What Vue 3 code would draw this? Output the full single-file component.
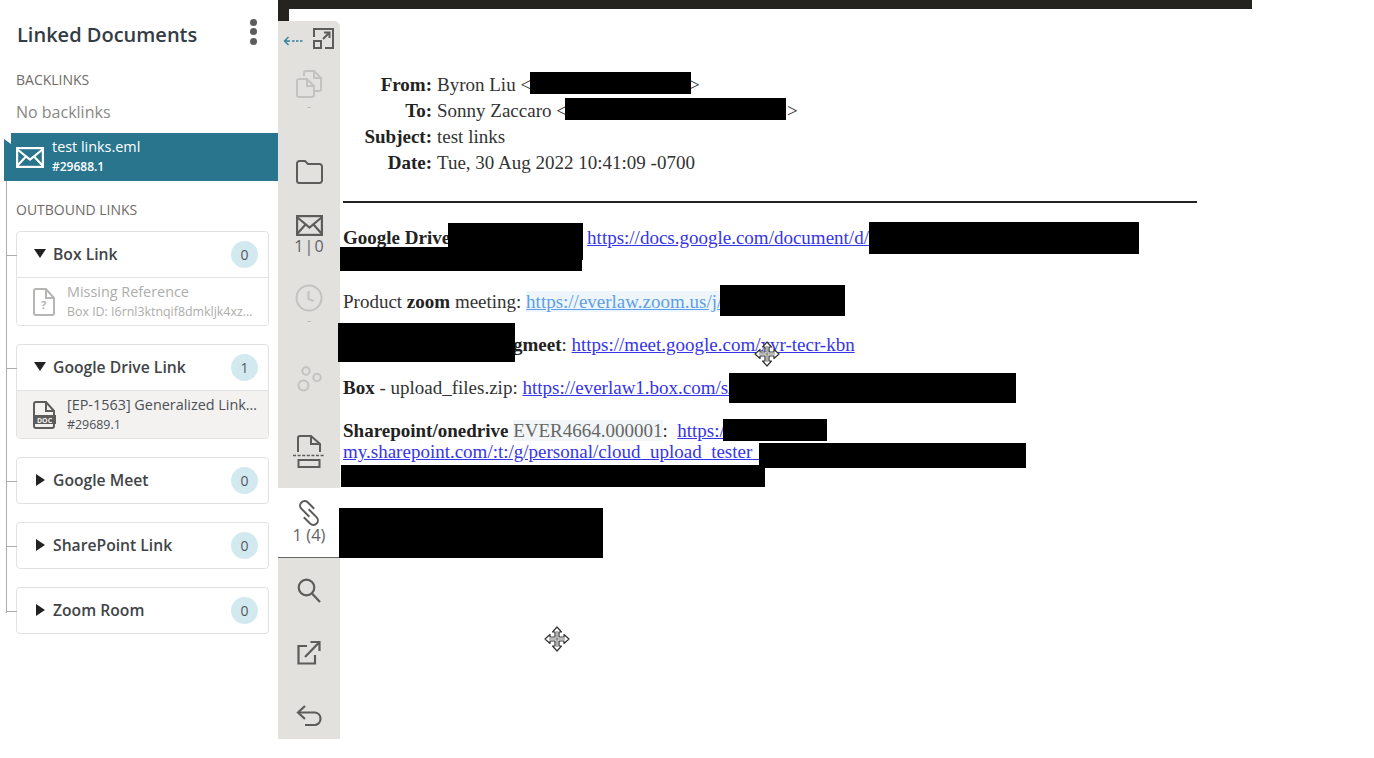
<script setup>
const groups = [
  { name: 'Box Link', count: 0, open: true, missing: true, title: 'Missing Reference', sub: 'Box ID: I6rnl3ktnqif8dmkljk4xzq7vbn2p0w' },
  { name: 'Google Drive Link', count: 1, open: true, title: '[EP-1563] Generalized Link Resolution', sub: '#29689.1' },
  { name: 'Google Meet', count: 0 },
  { name: 'SharePoint Link', count: 0 },
  { name: 'Zoom Room', count: 0 },
]
const redactions = [
  [530, 72, 161, 22], [565, 98, 221, 22], [448, 223, 135, 37], [340, 247, 242, 24],
  [869, 222, 270, 32], [720, 285, 125, 31], [338, 323, 177, 39], [729, 373, 287, 30],
  [723, 419, 104, 22], [759, 443, 267, 25], [341, 465, 424, 22], [339, 508, 264, 50],
]
const boxStyle = ([x, y, w, h]) => ({ left: x - 340 + 'px', top: y - 9 + 'px', width: w + 'px', height: h + 'px' })
const cursors = [{ left: '414px', top: '332px' }, { left: '204px', top: '617px' }]
</script>

<template>
  <div class="page">
    <aside class="side">
      <header class="side-head">
        <h1>Linked Documents</h1>
        <div class="kebab"><i></i><i></i><i></i></div>
      </header>
      <div class="label back-label">BACKLINKS</div>
      <div class="none">No backlinks</div>
      <div class="current">
        <svg width="28" height="21" viewBox="0 0 28 21" fill="none" stroke="#fff" stroke-width="2.2">
          <rect x="1.1" y="1.1" width="25.8" height="18.8" />
          <path d="M1.5 2.5 14 12.5 26.5 2.500M1.500 18.500 10 9.500M26.500 18.500 18 9.500" />
        </svg>
        <div class="current-text">
          <div class="current-name">test links.eml</div>
          <div class="current-id">#29688.1</div>
        </div>
      </div>
      <div class="tree">
        <div class="label out-label">OUTBOUND LINKS</div>
        <section v-for="g in groups" :key="g.name" class="card">
          <div class="card-head">
            <span :class="g.open ? 'tri-down' : 'tri-right'"></span>
            <span class="card-name">{{ g.name }}</span>
            <span class="badge">{{ g.count }}</span>
          </div>
          <div v-if="g.open" class="card-body" :class="{ missing: g.missing }">
            <svg width="24" height="28" viewBox="0 0 24 28" fill="none" stroke-width="2" :stroke="g.missing ? '#b5b5b3' : '#5c5c5a'">
              <path d="M22 10v15a2 2 0 0 1-2 2H4a2 2 0 0 1-2-2V3a2 2 0 0 1 2-2h10z" />
              <path d="M14 1v9h8" />
              <template v-if="g.missing">
                <text x="11.5" y="21" class="q" text-anchor="middle">?</text>
              </template>
              <template v-else>
                <rect x="1" y="14" width="23" height="9" fill="#5c5c5a" stroke="none" />
                <text x="12.5" y="21.5" class="doc" text-anchor="middle">DOC</text>
              </template>
            </svg>
            <div class="card-text">
              <div class="item-title">{{ g.title }}</div>
              <div class="item-sub">{{ g.sub }}</div>
            </div>
          </div>
        </section>
      </div>
    </aside>

    <main class="viewer">
      <div class="topbar"></div>
      <div class="viewer-body">
        <div class="rail-col">
          <div class="notch"></div>
          <nav class="rail">
            <div class="rail-top">
              <span class="back-arrow">
                <svg width="20" height="10" viewBox="0 0 20 10" fill="none" stroke="#2f7f9c" stroke-width="1.3">
                  <path d="M5.500 1 1.500 5l4 4M2 5h5" />
                  <path d="M9 5h11" stroke-dasharray="2.500 1.500" />
                </svg>
              </span>
              <svg width="21" height="21" viewBox="0 0 21 21" fill="none" stroke="#5c5c5a" stroke-width="2">
                <path d="M1 9V1h19v19h-8" />
                <rect x="1" y="13" width="7" height="7" />
                <path d="M10 11 16 5M11 4.500h5.500V10" />
              </svg>
            </div>
            <div class="ri dim copies">
              <svg width="26" height="28" viewBox="0 0 26 28" fill="none" stroke="#c2c2c0" stroke-width="2">
                <path d="M8 6V3a2 2 0 0 1 2-2h8l7 7v11a2 2 0 0 1-2 2h-4" />
                <path d="M1 11a2 2 0 0 1 2-2h8l7 7v9a2 2 0 0 1-2 2H3a2 2 0 0 1-2-2z" />
                <path d="M11 9v7h7M18 1v7h7" />
              </svg>
              <span class="dash">-</span>
            </div>
            <div class="ri folder">
              <svg width="27" height="24" viewBox="0 0 27 24" fill="none" stroke="#5c5c5a" stroke-width="2">
                <path d="M1 3.500A2.500 2.500 0 0 1 3.500 1H9l3 3h11.500A2.500 2.500 0 0 1 26 6.500V20.500A2.500 2.500 0 0 1 23.500 23H3.500A2.500 2.500 0 0 1 1 20.500z" />
              </svg>
            </div>
            <div class="ri mail">
              <svg width="27" height="21" viewBox="0 0 27 21" fill="none" stroke="#5c5c5a" stroke-width="2.200">
                <rect x="1.100" y="1.100" width="24.800" height="18.800" />
                <path d="M1.500 2.500 13.500 12.500 25.500 2.500M1.500 18.500 9.500 9.500M25.500 18.500 17.500 9.500" />
              </svg>
              <span class="count">1 | 0</span>
            </div>
            <div class="ri dim clock">
              <svg width="28" height="28" viewBox="0 0 28 28" fill="none" stroke="#c2c2c0" stroke-width="2">
                <circle cx="14" cy="14" r="12.500" />
                <path d="M13.500 7v8l5 2" />
              </svg>
              <span class="dash">-</span>
            </div>
            <div class="ri dim circles">
              <svg width="25" height="26" viewBox="0 0 25 26" fill="none" stroke="#c2c2c0" stroke-width="2">
                <circle cx="9" cy="5" r="3.700" />
                <circle cx="20" cy="11.500" r="3.700" />
                <circle cx="6.500" cy="19.500" r="5" />
              </svg>
            </div>
            <div class="ri print">
              <svg width="32" height="33" viewBox="0 0 32 33" fill="none" stroke="#5c5c5a" stroke-width="2">
                <path d="M5 17V3a2 2 0 0 1 2-2h11l9 8v8" />
                <path d="M18 1v8h9" />
                <path d="M0 20.500h32" stroke-width="1.600" stroke-dasharray="3 1.600" />
                <path d="M5.500 25h21v7h-21z" />
              </svg>
            </div>
            <div class="ri tab">
              <svg width="26" height="26" viewBox="0 0 26 26" fill="none" stroke="#5c5c5a" stroke-width="2">
                <path d="M18.180 8.820 11.680 2.320A4.500 4.500 0 0 0 5.320 8.680L13.320 16.680" />
                <path d="M7.820 17.180 14.320 23.680A4.500 4.500 0 0 0 20.680 17.320L12.680 9.320" />
              </svg>
              <span class="count tabcount">1 (4)</span>
            </div>
            <div class="ri search">
              <svg width="24" height="25" viewBox="0 0 24 25" fill="none" stroke="#5c5c5a" stroke-width="2.200">
                <circle cx="9.500" cy="9.500" r="7.800" />
                <path d="M15 15.500 23 24" />
              </svg>
            </div>
            <div class="ri share">
              <svg width="24" height="25" viewBox="0 0 24 25" fill="none" stroke="#5c5c5a" stroke-width="2.200">
                <path d="M10 6H1.500v17.500H18V15" />
                <path d="M8 17 22 2.500M13.500 2H22.500V11" />
              </svg>
            </div>
            <div class="ri undo">
              <svg width="27" height="21" viewBox="0 0 27 21" fill="none" stroke="#5c5c5a" stroke-width="2.200">
                <path d="M9 1 2 7.500 9 14" />
                <path d="M2 7.500H19a6.300 6.300 0 0 1 0 12.500H9" />
              </svg>
            </div>
          </nav>
        </div>

        <article class="doc-page">
          <dl class="mail-head">
            <dt>From:</dt><dd>Byron Liu &lt;<span class="hide h1"></span>&gt;</dd>
            <dt>To:</dt><dd>Sonny Zaccaro &lt;<span class="hide h2"></span>&gt;</dd>
            <dt>Subject:</dt><dd>test links</dd>
            <dt>Date:</dt><dd>Tue, 30 Aug 2022 10:41:09 -0700</dd>
          </dl>
          <hr />
          <p class="p-drive"><b>Google Drive</b><span class="hide h3"></span><a>https://docs.google.com/document/d/</a></p>
          <p>Product <b>zoom</b> meeting: <a class="soft">https://everlaw.zoom.us/j/9</a></p>
          <p class="p-meet"><b>gmeet</b>: <a>https://meet.google.com/xyr-tecr-kbn</a></p>
          <p><b>Box</b> - upload_files.zip: <a>https://everlaw1.box.com/s/</a></p>
          <p><b>Sharepoint/onedrive</b> <span class="ever">EVER4664.000001</span>:&nbsp; <a>https://e</a><br /><a>my.sharepoint.com/:t:/g/personal/cloud_upload_tester_</a></p>
          <div v-for="(r, i) in redactions" :key="i" class="redact" :style="boxStyle(r)"></div>
          <svg v-for="(c, i) in cursors" :key="'c' + i" class="cursor" :style="c" width="26" height="26" viewBox="0 0 26 26">
            <path d="M13 1l4.500 5H15v5h5V8.500l5 4.500-5 4.500V15h-5v5h2.500L13 25l-4.500-5H11v-5H6v2.500L1 13l5-4.500V11h5V6H8.500z" fill="#fff" stroke="#333" stroke-width="1.200" stroke-linejoin="round" />
            <path d="M13 5v16M5 13h16" stroke="#777" stroke-width="1.200" />
          </svg>
        </article>
      </div>
    </main>
  </div>
</template>

<style>
html, body { margin: 0; background: #fff; }
</style>

<style scoped>
.page { display: flex; width: 1374px; height: 758px; overflow: hidden; background: #fff; font-family: "Open Sans", sans-serif; }
.side { width: 278px; flex: none; box-sizing: border-box; }
.side-head { height: 68px; display: flex; align-items: center; justify-content: space-between; padding: 0 21px 0 17px; }
.side-head h1 { margin: 0; font-size: 20px; font-weight: 600; color: #333c44; }
.kebab { display: flex; flex-direction: column; gap: 2.500px; margin-top: -5px; }
.kebab i { width: 7px; height: 7px; border-radius: 50%; background: #5c5c5a; }
.label { font-size: 14px; line-height: 18px; color: #6e6b68; padding-left: 16px; }
.back-label { margin-top: 3px; }
.none { font-size: 16px; line-height: 22px; color: #8a8886; padding-left: 16px; margin-top: 12px; }
.current { margin: 10px 0 0 4px; height: 48px; background: #29758e; display: flex; align-items: center; color: #fff; padding-left: 12px; box-sizing: border-box; clip-path: polygon(7px 0, 100% 0, 100% 100%, 0 100%, 0 6px, 7px 11px); }
.current-text { margin-left: 8px; margin-top: -2px; }
.current-name { font-size: 14.400px; line-height: 20px; }
.current-id { font-size: 12px; line-height: 19px; font-weight: 600; }
.tree { position: relative; padding: 20px 9px 0 16px; }
.tree::before { content: ""; position: absolute; left: 6px; top: 0; height: 432px; width: 1px; background: #adadab; }
.out-label { padding-left: 0; height: 18px; margin-bottom: 12px; }
.card { position: relative; border: 1px solid #e2e2e0; border-radius: 4px; margin-bottom: 18px; background: #fff; }
.card::before { content: ""; position: absolute; left: -10px; top: 23px; width: 10px; height: 1px; background: #adadab; }
.card-head { height: 45px; display: flex; align-items: center; padding: 0 10px 0 17px; box-sizing: border-box; }
.card-name { font-size: 15.700px; font-weight: 600; color: #3f4448; margin: -2px 0 0 7px; flex: 1; }
.tri-down { width: 0; height: 0; border-left: 6.500px solid transparent; border-right: 6.500px solid transparent; border-top: 9px solid #222; margin-top: -2px; }
.tri-right { width: 0; height: 0; border-top: 6px solid transparent; border-bottom: 6px solid transparent; border-left: 9px solid #222; margin: -1px 1px 0 2px; }
.badge { width: 27px; height: 27px; border-radius: 50%; background: #d3e9f0; color: #54595c; font-size: 14px; display: flex; align-items: center; justify-content: center; margin-top: -1px; }
.card-body { height: 48px; border-top: 1px solid #e2e2e0; display: flex; align-items: center; padding-left: 15px; box-sizing: border-box; background: #f3f2f1; border-radius: 0 0 4px 4px; }
.card-body.missing { background: #fff; }
.card-text { margin-left: 11px; min-width: 0; width: 192px; }
.item-title { font-size: 14.400px; line-height: 20px; color: #4b5055; white-space: nowrap; overflow: hidden; text-overflow: ellipsis; }
.item-sub { width: 186px; font-size: 12.400px; line-height: 19px; color: #4b5055; white-space: nowrap; overflow: hidden; text-overflow: ellipsis; }
.missing .item-title, .missing .item-sub { color: #adadab; }
.q { font: 700 11px "Open Sans", sans-serif; fill: #b5b5b3; stroke: none; }
.doc { font: 700 7px "Open Sans", sans-serif; fill: #f3f2f1; stroke: none; }

.viewer { width: 974px; flex: none; }
.topbar { height: 9px; background: #252320; }
.viewer-body { display: flex; align-items: flex-start; position: relative; }
.rail-col { width: 62px; flex: none; }
.notch { width: 11px; height: 12px; background: #252320; }
.rail { height: 718px; background: #e2e1de; border-radius: 0 6px 0 0; display: flex; flex-direction: column; align-items: center; }
.rail-top { flex: none; height: 36px; width: 100%; display: flex; align-items: center; box-sizing: border-box; padding: 0 0 1px 5px; gap: 10px; }
.back-arrow { display: flex; margin-top: 5px; }
.ri { flex: none; display: flex; flex-direction: column; align-items: center; color: #5c5c5a; }
.ri svg { flex: none; display: block; }
.dash { font-size: 13px; line-height: 16px; color: #b9b9b7; }
.copies { margin-top: 13px; }
.folder { margin-top: 46px; }
.mail { margin-top: 31px; }
.count { font-size: 16px; line-height: 20px; color: #5f6368; white-space: nowrap; word-spacing: -3px; }
.clock { margin-top: 28px; }
.circles { margin-top: 38px; }
.print { margin-top: 43px; }
.tab { margin-top: 20px; width: 100%; height: 70px; background: #fff; border-bottom: 1px solid #666; box-sizing: border-box; padding-top: 12px; }
.tabcount { word-spacing: 0; font-size: 16.500px; line-height: 20px; margin-top: -1px; }
.search { margin-top: 20px; }
.share { margin-top: 37px; }
.undo { margin-top: 40px; }

.doc-page { position: relative; flex: 1; height: 700px; box-sizing: border-box; padding: 0 55px 0 3px; font-family: "Liberation Serif", serif; font-size: 19px; line-height: 21px; color: #333; }
.mail-head { margin: 63px 0 0; display: grid; grid-template-columns: 89px 1fr; column-gap: 5px; row-gap: 0; }
.mail-head dt { font-weight: 700; text-align: right; line-height: 26px; color: #222; }
.mail-head dd { margin: 0; line-height: 26px; white-space: nowrap; }
hr { margin: 25px 0 0; border: none; height: 2px; background: #222; }
p { margin: 0 0 22px; white-space: nowrap; }
p b { color: #222; }
.p-drive { margin-top: 24px; padding-bottom: 21px; }
.p-meet { padding-left: 170px; }
.hide { display: inline-block; }
.h1 { width: 158px; }
.h2 { width: 220px; }
.h3 { width: 137px; }
a { color: #3535e8; text-decoration: underline; }
a.soft { color: #5d9fe6; background: #eef5fb; }
.ever { color: #666; background: #f2f6f8; }
.redact { position: absolute; background: #000; }
.cursor { position: absolute; }
</style>
